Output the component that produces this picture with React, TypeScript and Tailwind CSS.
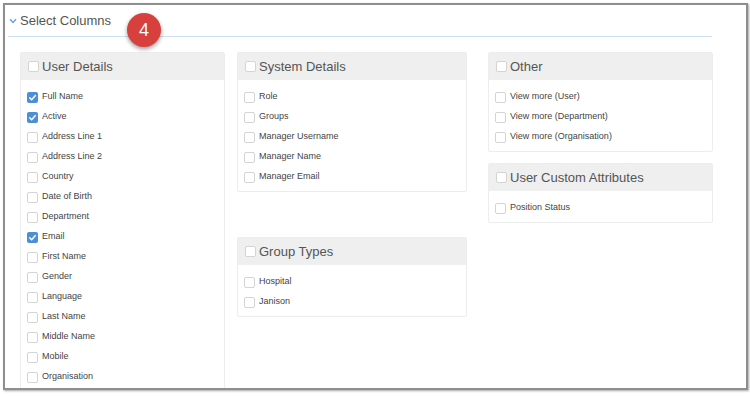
import React from 'react';

type Item = { label: string; checked?: boolean };

interface PanelProps {
  title: string;
  items: Item[];
  className?: string;
}

function Checkbox({ checked = false }: { checked?: boolean }) {
  if (checked) {
    return (
      <span className="flex h-[11px] w-[11px] shrink-0 items-center justify-center rounded-[2px] bg-[#4b8fd6]">
        <svg viewBox="0 0 12 12" className="h-[9px] w-[9px]">
          <path d="M2.2 6.4 L4.8 8.9 L9.9 3.3" fill="none" stroke="#ffffff" strokeWidth="1.9" strokeLinecap="round" strokeLinejoin="round" />
        </svg>
      </span>
    );
  }
  return <span className="h-[11px] w-[11px] shrink-0 rounded-[2px] border border-[#d4d4d4] bg-white" />;
}

function Panel({ title, items, className = '' }: PanelProps) {
  return (
    <div className={`rounded-[2px] border border-[#ededed] bg-white ${className}`}>
      <div className="flex h-[27px] items-center gap-[3px] bg-[#efefef] pl-[7px]">
        <Checkbox />
        <span className="text-[13px] text-[#555555]">{title}</span>
      </div>
      <div className="pb-[4px] pt-[7px]">
        {items.map((item) => (
          <div key={item.label} className="flex h-[20px] items-center gap-[4px] pl-[6px]">
            <Checkbox checked={item.checked} />
            <span className="text-[9px] text-[#444444]">{item.label}</span>
          </div>
        ))}
      </div>
    </div>
  );
}

const userDetails: Item[] = [
  { label: 'Full Name', checked: true },
  { label: 'Active', checked: true },
  { label: 'Address Line 1' },
  { label: 'Address Line 2' },
  { label: 'Country' },
  { label: 'Date of Birth' },
  { label: 'Department' },
  { label: 'Email', checked: true },
  { label: 'First Name' },
  { label: 'Gender' },
  { label: 'Language' },
  { label: 'Last Name' },
  { label: 'Middle Name' },
  { label: 'Mobile' },
  { label: 'Organisation' },
];

const systemDetails: Item[] = [
  { label: 'Role' },
  { label: 'Groups' },
  { label: 'Manager Username' },
  { label: 'Manager Name' },
  { label: 'Manager Email' },
];

const groupTypes: Item[] = [{ label: 'Hospital' }, { label: 'Janison' }];

const other: Item[] = [
  { label: 'View more (User)' },
  { label: 'View more (Department)' },
  { label: 'View more (Organisation)' },
];

const customAttributes: Item[] = [{ label: 'Position Status' }];

export default function App() {
  return (
    <div className="h-[396px] w-[750px] overflow-hidden bg-white pl-[3px] pt-[3px]" style={{ fontFamily: '"Liberation Sans", Arial, sans-serif' }}>
      <div className="relative h-[387px] w-[745px] overflow-hidden border-2 border-[#8e8e8e] bg-white shadow-[1px_1px_2px_rgba(0,0,0,0.35)]">
        <div className="mx-[3px] flex h-[32px] w-[704px] items-center border-b border-[#cddff0] pl-[1px]">
          <svg viewBox="0 0 8 6" className="mr-[3px] h-[6px] w-[8px]">
            <path d="M1 1.2 L4 4.4 L7 1.2" fill="none" stroke="#6aa3d8" strokeWidth="1.5" />
          </svg>
          <span className="text-[13px] text-[#555555]">Select Columns</span>
        </div>

        <div className="absolute left-[122px] top-[8px] flex h-[34px] w-[34px] items-center justify-center rounded-full bg-[#d8403d] text-[18px] text-white shadow-[0_2px_4px_rgba(0,0,0,0.4)]">
          4
        </div>

        <div className="ml-[15px] mt-[15px] flex items-start">
          <Panel title="User Details" items={userDetails} className="h-[400px] w-[205px]" />
          <div className="ml-[12px] flex w-[230px] flex-col">
            <Panel title="System Details" items={systemDetails} />
            <Panel title="Group Types" items={groupTypes} className="mt-[45px]" />
          </div>
          <div className="ml-[21px] flex w-[225px] flex-col">
            <Panel title="Other" items={other} />
            <Panel title="User Custom Attributes" items={customAttributes} className="mt-[11px]" />
          </div>
        </div>
      </div>
    </div>
  );
}
